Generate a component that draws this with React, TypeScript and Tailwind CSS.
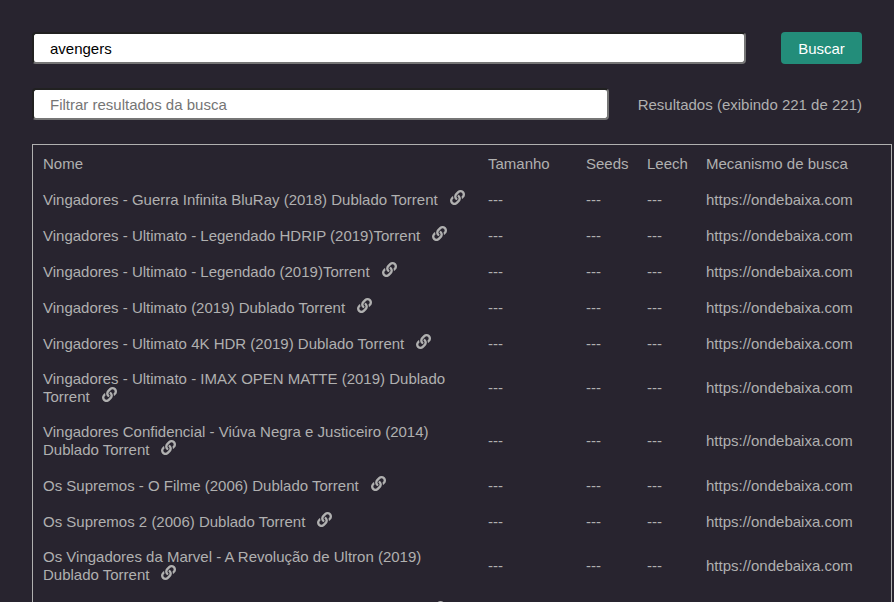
import { useState } from "react";
import { FaLink } from "react-icons/fa";

const titles = [
  "Vingadores - Guerra Infinita BluRay (2018) Dublado Torrent",
  "Vingadores - Ultimato - Legendado HDRIP (2019)Torrent",
  "Vingadores - Ultimato - Legendado (2019)Torrent",
  "Vingadores - Ultimato (2019) Dublado Torrent",
  "Vingadores - Ultimato 4K HDR (2019) Dublado Torrent",
  "Vingadores - Ultimato - IMAX OPEN MATTE (2019) Dublado Torrent",
  "Vingadores Confidencial - Viúva Negra e Justiceiro (2014) Dublado Torrent",
  "Os Supremos - O Filme (2006) Dublado Torrent",
  "Os Supremos 2 (2006) Dublado Torrent",
  "Os Vingadores da Marvel - A Revolução de Ultron (2019) Dublado Torrent",
  "Os Vingadores 2 - The Avengers (2015) Dublado Torrent",
];

const inputStyle =
  "h-8 min-w-0 flex-1 rounded-[4px] border-2 border-t-[#212121] border-l-[#212121] border-r-[#767676] border-b-[#767676] bg-white px-4 text-black placeholder:text-[#757575] placeholder:opacity-100 outline-none";

export default function App() {
  const [query, setQuery] = useState("avengers");
  const [filter, setFilter] = useState("");

  return (
    <main className="h-screen overflow-hidden bg-[#28242f] p-8 font-['Liberation_Sans',Arial,sans-serif] text-[15px] leading-[normal] text-[#b0b0b0]">
      <form className="flex items-center gap-[35px]" onSubmit={(e) => e.preventDefault()}>
        <input
          aria-label="Buscar torrents"
          className={inputStyle}
          value={query}
          onChange={(e) => setQuery(e.target.value)}
        />
        <button type="submit" className="h-8 w-[81px] rounded-[4px] bg-[#238d7a] text-white">
          Buscar
        </button>
      </form>

      <div className="mt-6 flex items-center gap-[29px]">
        <input
          aria-label="Filtrar resultados da busca"
          placeholder="Filtrar resultados da busca"
          className={inputStyle}
          value={filter}
          onChange={(e) => setFilter(e.target.value)}
        />
        <p className="whitespace-nowrap">Resultados (exibindo 221 de 221)</p>
      </div>

      <table className="mt-6 w-[calc(100%+30px)] table-fixed border-separate border-spacing-[2px] border border-[#b0b0b0] text-left">
        <colgroup>
          <col />
          <col className="w-[96px]" />
          <col className="w-[59px]" />
          <col className="w-[57px]" />
          <col className="w-[191px]" />
        </colgroup>
        <thead>
          <tr>
            <th className="p-2 font-normal">Nome</th>
            <th className="p-2 font-normal">Tamanho</th>
            <th className="p-2 font-normal">Seeds</th>
            <th className="p-2 font-normal">Leech</th>
            <th className="p-2 font-normal">Mecanismo de busca</th>
          </tr>
        </thead>
        <tbody>
          {titles.map((title) => (
            <tr key={title}>
              <td className="p-2">
                {title}
                <a href="#" aria-label="Abrir link" className="ml-3">
                  <FaLink className="inline size-[15px] align-baseline" />
                </a>
              </td>
              <td className="p-2">---</td>
              <td className="p-2">---</td>
              <td className="p-2">---</td>
              <td className="p-2">https://ondebaixa.com</td>
            </tr>
          ))}
        </tbody>
      </table>
    </main>
  );
}
